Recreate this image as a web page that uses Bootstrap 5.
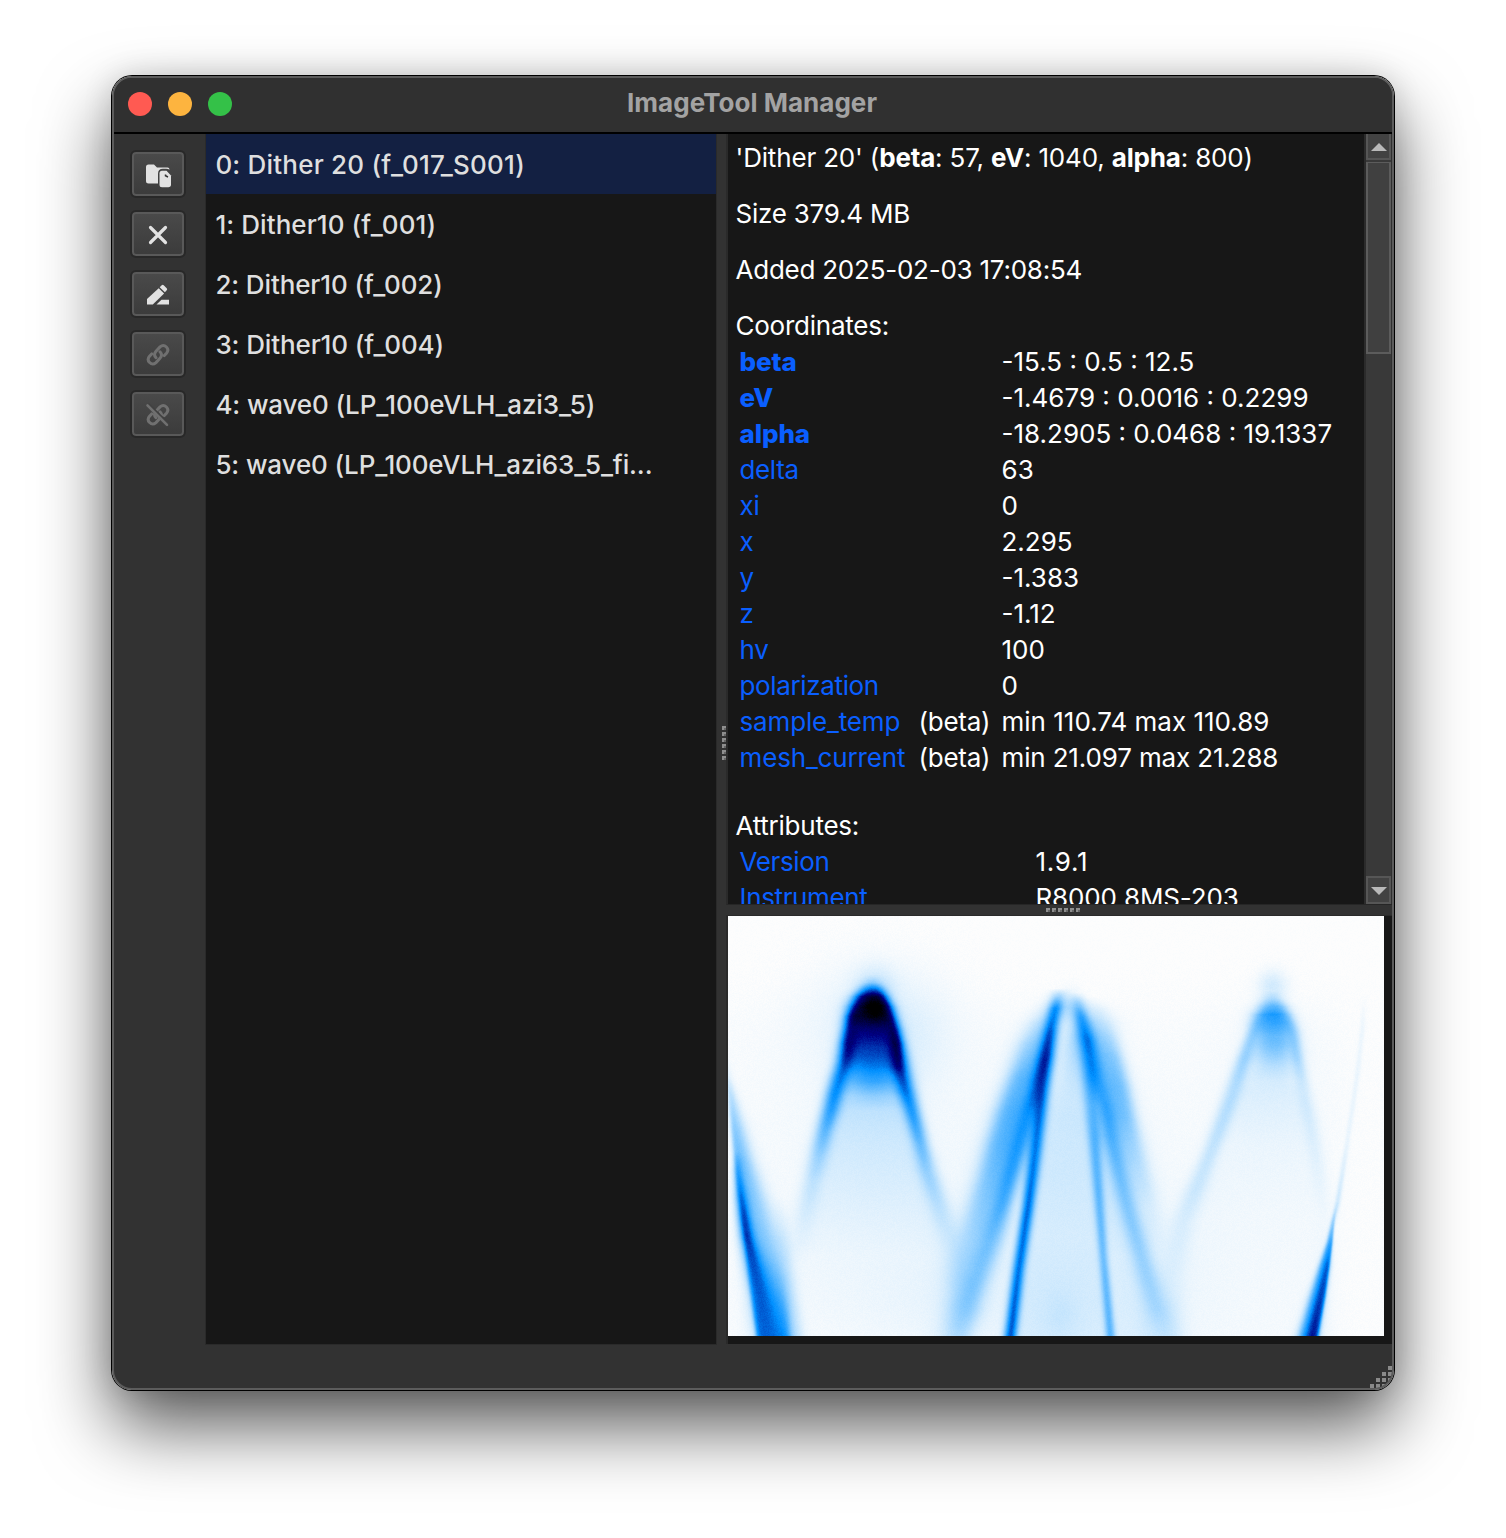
<!DOCTYPE html>
<html lang="en" data-bs-theme="dark">
<head>
<meta charset="utf-8">
<title>ImageTool Manager</title>
<link href="https://cdn.jsdelivr.net/npm/bootstrap@5.3.0/dist/css/bootstrap.min.css" rel="stylesheet">
<style>
  body{background:#fff;font-family:Inter,"Liberation Sans",sans-serif;font-size:26px;line-height:36px;color:#fff;height:1538px;overflow:hidden;padding:76px 0 0 112px}
  .win{width:1282px;height:1314px;background:#323232;border:2px solid #5c5c5c;border-radius:20px;overflow:hidden;position:relative}
  .win-shadow{width:1282px;border-radius:20px;box-shadow:0 0 0 1px #000,0 36px 72px rgba(0,0,0,.66),0 0 30px rgba(0,0,0,.14)}
  .titlebar{height:56px;border-bottom:2px solid #000;background:#303030;color:#a3a3a3;font-weight:700;letter-spacing:.03px;padding:0 0 2px 14px}
  .title-text{left:-1px;top:7px}
  .dot{width:24px;height:24px;border-radius:50%}
  .dot-r{background:#ff5a52}.dot-y{background:#fdb43f}.dot-g{background:#34c148}
  .toolcol{width:91px;padding:16px 0 0 16px}
  .tbtn{width:56px;height:48px;padding:1px 0 0;border:2px solid #282828;border-radius:6px;background:linear-gradient(#4a4a4a,#3b3b3b);box-shadow:inset 0 0 0 2px #595959;color:#e2e2e2;margin-bottom:12px;display:flex;align-items:center;justify-content:center}
  .tbtn:disabled{opacity:1;color:#707070;background:linear-gradient(#4a4a4a,#3b3b3b);border-color:#282828}
  .tbtn svg{display:block}
  .names{width:513px;height:1211px;background:#171717;border:1px solid #2a2a2a;border-top:0}
  .names .list-group-item{height:60px;padding:13px 10px 0 9.500px;background:none;border:0;color:#dfdfdf;white-space:nowrap;font-weight:500;letter-spacing:-.12px}
  .names .list-group-item.active{background:#132042}
  .names .ls-a{letter-spacing:.2px}.names .ls-b{letter-spacing:.08px}
  .splitv{width:9px;height:1211px}
  .grip{width:4px;height:4px;background:#666;border-top:2px solid #8e8e8e;border-left:2px solid #8e8e8e}
  .grip-v{gap:2px;padding:7px 0 0 5px}
  .grip-h{gap:2px;padding-left:8px}
  .details{height:771px;background:#171717;border-left:2px solid #2a2a2a;border-bottom:1px solid #262626}
  .pane{width:636px;height:770px;padding:6px 0 0 7.500px;overflow:hidden;white-space:nowrap;letter-spacing:-.24px}
  .pane p{margin:0 0 20px}
  .pane .coords{margin-bottom:32px}
  .key{color:#0a5fff;letter-spacing:-.16px}
  .key.tight{letter-spacing:-.36px}
  b{font-weight:700}
  .dim-line{letter-spacing:-.17px}
  .key b{letter-spacing:-.1px;font-weight:800}
  .val{letter-spacing:0}
  .val.tight{letter-spacing:-.15px}.val.wide{letter-spacing:.7px}
  .c1{width:179px;padding-left:4px}.c2{width:87px;padding-left:4px}.a1{width:300px;padding-left:4px}
  .sbar{width:28px;background:#393939;border-left:2px solid #2b2b2b;border-right:1px solid #303030}
  .sbtn{height:26px;background:#424242;border:2px solid #565656;border-top-width:0;padding-top:1px}
  .sbtn-down{height:28px;border-top-width:2px}
  .thumb{height:192px;background:#404040;border:2px solid #5c5c5c;border-top-width:1px;margin-top:2px}
  .preview{height:429px;background:#171717;border-left:2px solid #2a2a2a;border-top:1px solid #2a2a2a}
  .splith{height:10px}
  .sizegrip{position:absolute;right:0;bottom:0}
  canvas{display:block;background:#fdfdfd}
</style>
<script src="https://cdn.jsdelivr.net/npm/bootstrap@5.3.0/dist/js/bootstrap.bundle.min.js"></script>
</head>
<body>
<div class="win-shadow"><div class="win">
  <header class="titlebar d-flex align-items-center position-relative">
    <div class="d-flex gap-3"><span class="dot dot-r"></span><span class="dot dot-y"></span><span class="dot dot-g"></span></div>
    <div class="title-text position-absolute w-100 text-center pe-none">ImageTool Manager</div>
  </header>
  <main class="d-flex">
    <nav class="toolcol d-flex flex-column">
      <button class="btn tbtn" aria-label="Open"><svg width="28" height="28" viewBox="0 0 28 28" fill="currentColor"><path d="M4.500 3.500h5.500l3 3h10.500q2 0 2 2.300-1-1-3.500-1h-3q-5 0-5 5v9.700H4.500Q2 22.500 2 20v-14Q2 3.500 4.500 3.500z"/><path d="M18 9.800h4.500L27 14.500v9q0 2.700-2.700 2.700H18q-2.500 0-2.500-2.500V12.300q0-2.500 2.500-2.500z"/><path d="M21.500 13.500v1.300l2.500 1.200" stroke="#333" stroke-width="1.500" fill="none"/></svg></button>
      <button class="btn tbtn" aria-label="Close"><svg width="20" height="20" viewBox="0 0 20 20" stroke="currentColor" stroke-width="3.200" stroke-linecap="round"><path d="M2.500 2.500l15 15M17.500 2.500L2.500 17.500"/></svg></button>
      <button class="btn tbtn" aria-label="Rename"><svg width="24" height="24" viewBox="0 0 24 24" fill="currentColor"><path d="M1 21.500v-5.600L12.700 5.300l5.400 5.200L6.800 21.500z"/><path d="M13.700 4.200l2-2q1-.9 2 0l3 3q1 1 0 2l-1.800 2z"/><path d="M10.500 21.500l5-4.700H23v4.700z"/></svg></button>
      <button class="btn tbtn" disabled aria-label="Link"><svg width="26" height="26" viewBox="0 0 26 26" fill="none" stroke="currentColor" stroke-width="3" stroke-linecap="round"><path d="M11 15.700q-3-3.200 0-6.500l4-4.300q3.400-2.900 6.400.1 2.900 3 .1 6.200l-2.200 2.400"/><path d="M15 9.800q3 3.200 0 6.500l-4 4.300q-3.400 2.900-6.400-.1-2.900-3-.1-6.200l2.200-2.400"/></svg></button>
      <button class="btn tbtn" disabled aria-label="Unlink"><svg width="26" height="26" viewBox="0 0 26 26" fill="none" stroke="currentColor" stroke-width="3" stroke-linecap="round"><path d="M11 15.700q-3-3.200 0-6.500l4-4.300q3.400-2.900 6.400.1 2.900 3 .1 6.200l-2.200 2.400"/><path d="M15 9.800q3 3.200 0 6.500l-4 4.300q-3.400 2.900-6.400-.1-2.900-3-.1-6.200l2.200-2.400"/><path d="M4.200 2.300L24 22" stroke="#414141" stroke-width="1.800"/><path d="M2.500 3.300L22 22.800" stroke-width="2.600"/></svg></button>
    </nav>
    <div class="names list-group rounded-0">
      <div class="list-group-item active"><span class="ls-a">0: Dither 20 (f_017_S001)</span></div>
      <div class="list-group-item"><span class="ls-b">1: Dither10 (f_001)</span></div>
      <div class="list-group-item">2: Dither10 (f_002)</div>
      <div class="list-group-item">3: Dither10 (f_004)</div>
      <div class="list-group-item">4: wave0 (LP_100eVLH_azi3_5)</div>
      <div class="list-group-item">5: wave0 (LP_100eVLH_azi63_5_fi...</div>
    </div>
    <div class="splitv grip-v d-flex flex-column justify-content-center"><i class="grip"></i><i class="grip"></i><i class="grip"></i><i class="grip"></i><i class="grip"></i><i class="grip"></i></div>
    <section class="flex-grow-1">
      <div class="details d-flex">
        <div class="pane">
          <p class="dim-line">'Dither 20' (<b>beta</b>: 57, <b>eV</b>: 1040, <b>alpha</b>: 800)</p>
          <p>Size 379.4 MB</p>
          <p>Added 2025-02-03 17:08:54</p>
          <div>Coordinates:</div>
          <div class="coords">
            <div class="d-flex"><span class="c1 key"><b>beta</b></span><span class="c2"></span><span class="val">-15.5 : 0.5 : 12.5</span></div>
            <div class="d-flex"><span class="c1 key"><b>eV</b></span><span class="c2"></span><span class="val">-1.4679 : 0.0016 : 0.2299</span></div>
            <div class="d-flex"><span class="c1 key"><b>alpha</b></span><span class="c2"></span><span class="val">-18.2905 : 0.0468 : 19.1337</span></div>
            <div class="d-flex"><span class="c1 key tight">delta</span><span class="c2"></span><span class="val">63</span></div>
            <div class="d-flex"><span class="c1 key">xi</span><span class="c2"></span><span class="val">0</span></div>
            <div class="d-flex"><span class="c1 key">x</span><span class="c2"></span><span class="val">2.295</span></div>
            <div class="d-flex"><span class="c1 key">y</span><span class="c2"></span><span class="val">-1.383</span></div>
            <div class="d-flex"><span class="c1 key">z</span><span class="c2"></span><span class="val">-1.12</span></div>
            <div class="d-flex"><span class="c1 key">hv</span><span class="c2"></span><span class="val">100</span></div>
            <div class="d-flex"><span class="c1 key tight">polarization</span><span class="c2"></span><span class="val">0</span></div>
            <div class="d-flex"><span class="c1 key">sample_temp</span><span class="c2">(beta)</span><span class="val">min 110.74 max 110.89</span></div>
            <div class="d-flex"><span class="c1 key">mesh_current</span><span class="c2">(beta)</span><span class="val tight">min 21.097 max 21.288</span></div>
          </div>
          <div>Attributes:</div>
          <div class="d-flex"><span class="a1 key tight">Version</span><span class="val wide">1.9.1</span></div>
          <div class="d-flex"><span class="a1 key tight">Instrument</span><span class="val tight">R8000 8MS-203</span></div>
        </div>
        <div class="sbar d-flex flex-column">
          <div class="sbtn d-flex align-items-center justify-content-center"><svg width="16" height="8"><path d="M0 8L8 0l8 8z" fill="#b9b9b9"/></svg></div>
          <div class="thumb"></div>
          <div class="sbtn sbtn-down mt-auto d-flex align-items-center justify-content-center"><svg width="16" height="8"><path d="M0 0h16L8 8z" fill="#b9b9b9"/></svg></div>
        </div>
      </div>
      <div class="splith grip-h d-flex justify-content-center align-items-center"><i class="grip"></i><i class="grip"></i><i class="grip"></i><i class="grip"></i><i class="grip"></i><i class="grip"></i></div>
      <div class="preview"><canvas id="map" width="656" height="420"></canvas></div>
    </section>
  </main>
  <svg class="sizegrip" width="22" height="22" fill="#8a8a8a"><path d="M18 0h4v4h-4zM12 6h4v4h-4zM18 6h4v4h-4zM6 12h4v4H6zM12 12h4v4h-4zM18 12h4v4h-4zM0 18h4v4H0zM6 18h4v4H6zM12 18h4v4h-4z"/></svg>
</div></div>
<script>
// Intensity map: bands and ridges tabulated against the vertical axis, then colour-mapped.
const W = 656, H = 420, f = new Float32Array(W * H);
function at(t, y) {
  if (y <= t[0][0]) return t[0];
  for (let i = 1; i < t.length; i++) if (y <= t[i][0]) {
    const a = t[i - 1], b = t[i], k = (y - a[0]) / (b[0] - a[0]);
    return a.map((v, j) => v + (b[j] - v) * k);
  }
  return t[t.length - 1];
}
const sg = v => 1 / (1 + Math.exp(-v));
// rows: [y, left edge, right edge, intensity, left softness, right softness]
const bands = [
  [[58,142,146,0,7,7],[66,137,150,.16,6,6],[72,133,154,.44,6,5],[80,127,158,.76,6,5],[90,122,163,.88,6,5],[100,118,166,.86,5,5],[112,116,170,.74,5,5],[127,113,173,.64,5,5],[140,113,174,.54,6,6],[150,114,174,.44,7,7],[160,115,174,.32,8,8],[170,113,175,.22,9,8],[180,110,178,.14,9,7],[192,105,181,.1,8,7],[210,99,188,.08,8,7],[230,93,194,.065,9,7],[260,84,203,.05,9,8],[300,74,214,.03,9,8],[340,70,222,.01,9,8],[419,70,230,0,8,8]],
  [[135,-4,-2,0,2,2],[160,-3,1,.08,2,3],[178,0,5,.18,2,4],[211,3,13,.26,2,6],[244,6,21,.31,2,7],[275,9,31,.28,2,8],[300,12,39,.26,2,9],[330,16,47,.28,2,9],[361,20,54,.34,2,7],[390,24,58,.4,2,5],[419,28,61,.45,2,4]],
  [[280,45,56,0,5,5],[320,48,60,.06,5,5],[360,52,65,.07,5,5],[390,55,69,.1,5,5],[419,58,73,.12,5,5]],
  [[72,326,332,0,7,5],[90,316,330,.1,9,5],[107,305,325,.18,10,6],[127,294,318,.24,9,7],[161,282,308,.34,8,7],[194,270,298,.36,8,7],[227,260,289,.34,8,7],[261,251,280,.28,8,7],[294,241,272,.22,9,7],[327,231,262,.18,11,8],[361,225,254,.18,11,8],[394,221,248,.17,10,8],[419,217,240,.13,10,8]],
  [[80,333,347,0,6,6],[100,334,350,.03,5,5],[125,332,353,.06,5,5],[161,327,357,.07,5,4],[200,318,361,.08,6,3],[260,308,367,.065,6,3],[320,300,373,.04,6,3],[419,288,380,.04,6,3]],
  [[80,350,364,0,6,9],[92,350,374,.08,6,9],[105,353,381,.14,6,9],[120,357,386,.2,6,7],[141,365,392,.26,7,6],[170,374,399,.31,8,6],[200,381,405,.29,9,6],[227,390,411,.22,9,7],[257,398,419,.14,9,7],[291,406,428,.07,9,8],[340,412,438,.03,9,9],[419,412,450,.03,9,9]],
  [[160,362,372,.0,5,5],[220,368,385,.08,4,6],[280,374,397,.07,4,6],[340,380,413,.035,5,9],[419,384,432,.035,5,10]],
  [[74,540,548,0,6,6],[82,537,551,.15,7,6],[90,533,556,.34,7,6],[98,529,559,.45,7,6],[107,527,562,.37,7,6],[120,526,563,.22,7,7],[135,526,563,.15,9,8],[150,524,564,.1,10,8],[165,516,566,.06,9,7],[190,503,576,.04,8,7],[230,490,584,.02,8,7],[300,465,594,.01,9,8],[419,440,600,.005,10,8]],
  [[285,608,609,0,1.500,1],[305,603,606,.22,1.500,1],[325,599,604,.4,1.800,1],[350,591,601,.43,2.500,1],[380,582,597,.42,3.5,1.2],[419,571,590,.43,4,1.4]]
];
// rows: [y, centre, sigma, intensity]
const ridges = [
  [[90,127,4,0],[110,121,5,.06],[127,119,6,.15],[145,115,6,.3],[160,111,6.5,.4],[178,106,6.5,.42],[194,102,6.5,.37],[215,96,6.5,.26],[240,90,7,.15],[265,84,7,.08],[300,76,8,.04],[350,68,8,0]],
  [[90,162,4,0],[110,166,4.5,.1],[127,169,5.5,.26],[150,172,6.5,.42],[175,178,6.5,.44],[200,185,6,.36],[227,192,6,.24],[255,199,7,.15],[290,211,8,.09],[330,223,9,.03],[380,230,9,0]],
  [[235,8,3,0],[255,9,3.500,.16],[280,12,4.5,.3],[300,15,5,.38],[320,18,5.500,.39],[345,24,7,.3],[380,32,9,.2],[419,38,11,.12]],
  [[72,331,6,0],[82,329,5,.16],[92,327,5,.38],[115,322,5.500,.46],[144,315,6,.44],[175,307,6,.38],[201,300,7,.32],[230,292,7,.31],[261,283,7,.28],[290,275,7,.23],[311,269,8,.18],[354,255,9,.1],[387,241,10,.06],[419,232,10,.02]],
  [[110,326,4.5,0],[140,321,5,.22],[181,314,5,.42],[234,307,5,.48],[294,299,4.5,.52],[354,290,4.5,.5],[419,282,4.500,.55]],
  [[76,348,5,0],[88,350,5,.14],[100,352,5,.26],[120,355,6,.28],[155,360,6,.27],[190,363,5,.24],[224,366,4.500,.27],[274,370,4,.26],[341,375,3.500,.22],[419,382,3.500,.27]],
  [[90,352,5,0],[105,357,6,.1],[125,361,6,.2],[161,368,6.5,.25],[190,376,6.5,.24],[220,382,7,.22],[257,391,7,.19],[301,402,7,.16],[351,416,8,.13],[391,428,9,.1],[419,435,10,.03]],
  [[95,530,5,0],[115,524,4.5,.1],[141,516,5.500,.16],[174,505,6.5,.12],[207,493,6.5,.11],[241,480,6.5,.09],[274,467,8,.08],[307,454,9,.05],[360,444,10,.03]],
  [[95,560,4,0],[115,565,4.5,.1],[141,569,4.5,.12],[174,575,5.5,.06],[207,582,6,.05],[241,588,6,.035],[300,596,7,.01]],
  [[75,636,2.5,0],[110,634,2,.025],[157,629,2,.03],[224,619,2,.03],[287,609,2,.08],[310,605,2,0]],
  [[320,604,2,0],[350,599,3,.14],[380,592,4,.2],[419,584,5,.27]],
  [[130,146,12,0],[150,145,14,.06],[165,145,15,.1],[178,145,15,.05],[195,145,15,0]]
];
// [x, y, sigma x, sigma y, intensity]
const spots = [[147,91,7,10,.1],[544,70,10,11,.08],[547,128,14,14,.09],[146,100,46,38,.035],[146,70,14,14,.08],[185,125,25,35,.025],[332,400,12,18,.025],[339,90,9,9,.1],[344,130,6,26,.05],[340,340,90,90,.025],[546,170,40,60,.008],[145,220,70,110,.014],[250,390,110,40,.018]];
let seed = 7;
const rnd = () => (seed = (seed * 16807) % 2147483647) / 2147483647 - .5;
for (let y = 0; y < H; y++) {
  const B = bands.map(t => at(t, y)), R = ridges.map(t => at(t, y));
  for (let x = 0; x < W; x++) {
    let v = .01 * sg((y - 85) / 18) * (1 - .6 * sg((x - 615) / 8));
    for (const b of B) if (b[3]) v += b[3] * sg((x - b[1]) * 1.6 / b[4]) * sg((b[2] - x) * 1.6 / b[5]);
    for (const r of R) { const d = (x - r[1]) / r[2]; if (r[3] && d * d < 16) v += r[3] * Math.exp(-d * d / 2); }
    for (const s of spots) v += s[4] * Math.exp(-((x - s[0]) ** 2 / s[2] ** 2 + (y - s[1]) ** 2 / s[3] ** 2) / 2);
    f[y * W + x] = v + rnd() * (.012 + v * .03);
  }
}
const stops = [[0,253,253,253],[.5,0,144,255],[.75,0,0,132],[1,0,0,0]];
const ctx = document.getElementById('map').getContext('2d'), im = ctx.createImageData(W, H);
for (let i = 0; i < f.length; i++) {
  const c = at(stops, Math.max(0, Math.min(1, f[i])));
  im.data.set([c[1], c[2], c[3], 255], i * 4);
}
ctx.putImageData(im, 0, 0);
</script>
</body>
</html>
